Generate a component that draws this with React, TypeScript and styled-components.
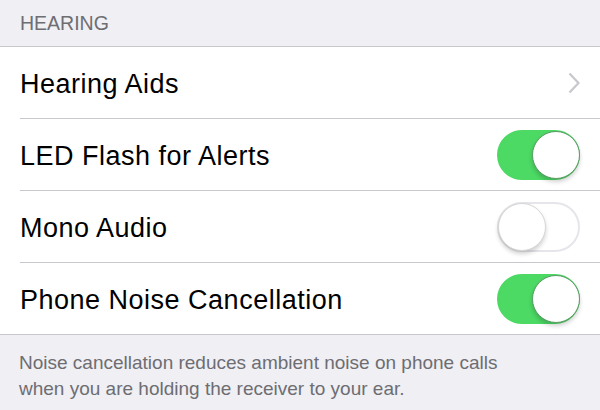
import React from 'react';
import styled, { createGlobalStyle } from 'styled-components';

const GlobalStyle = createGlobalStyle`
  html, body {
    margin: 0;
    padding: 0;
    background: #efeff4;
  }
  body {
    font-family: "Liberation Sans", Arial, sans-serif;
    -webkit-font-smoothing: antialiased;
  }
`;

const Page = styled.div`
  width: 600px;
  height: 410px;
  background: #efeff4;
  overflow: hidden;
`;

const SectionHeader = styled.div`
  height: 46px;
  box-sizing: border-box;
  padding: 12px 0 0 20px;
  font-size: 19.5px;
  color: #6d6d72;
`;

const Group = styled.div`
  background: #fff;
  border-top: 1px solid #c8c7cc;
  border-bottom: 1px solid #c8c7cc;
`;

const Row = styled.div<{ $last?: boolean }>`
  height: 71px;
  display: flex;
  align-items: center;
  justify-content: space-between;
  margin-left: 20px;
  padding-right: 20px;
  border-bottom: ${(p) => (p.$last ? 'none' : '1px solid #c8c7cc')};
`;

const Label = styled.span`
  padding-top: 3px;
  font-size: 27px;
  letter-spacing: 0.5px;
  color: #000;
`;

const Chevron = styled.svg`
  width: 12px;
  height: 22px;
`;

const Track = styled.div<{ $on: boolean }>`
  position: relative;
  width: 83px;
  height: 50px;
  box-sizing: border-box;
  border-radius: 25px;
  background: ${(p) => (p.$on ? '#4cd964' : '#fff')};
  border: 2px solid ${(p) => (p.$on ? '#4cd964' : '#e5e5ea')};
`;

const Knob = styled.div<{ $on: boolean }>`
  position: absolute;
  top: -1px;
  left: ${(p) => (p.$on ? '33px' : '-1px')};
  width: 48px;
  height: 48px;
  box-sizing: border-box;
  border-radius: 50%;
  background: #fff;
  border: 1px solid ${(p) => (p.$on ? '#5a9c66' : '#d6d6d6')};
  box-shadow: 0 3px 4px rgba(0, 0, 0, 0.18);
`;

const Footer = styled.div`
  padding: 15px 20px 0 19px;
  font-size: 19px;
  line-height: 26px;
  color: #6d6d72;
`;

function Switch({ on }: { on: boolean }) {
  return (
    <Track $on={on}>
      <Knob $on={on} />
    </Track>
  );
}

export default function App() {
  return (
    <Page>
      <GlobalStyle />
      <SectionHeader>HEARING</SectionHeader>
      <Group>
        <Row>
          <Label>Hearing Aids</Label>
          <Chevron viewBox="0 0 12 22">
            <path d="M1.5 1.5 L10.5 11 L1.5 20.5" fill="none" stroke="#c7c7cc" strokeWidth="2.2" />
          </Chevron>
        </Row>
        <Row>
          <Label>LED Flash for Alerts</Label>
          <Switch on />
        </Row>
        <Row>
          <Label>Mono Audio</Label>
          <Switch on={false} />
        </Row>
        <Row $last>
          <Label>Phone Noise Cancellation</Label>
          <Switch on />
        </Row>
      </Group>
      <Footer>
        Noise cancellation reduces ambient noise on phone calls
        <br />
        when you are holding the receiver to your ear.
      </Footer>
    </Page>
  );
}
